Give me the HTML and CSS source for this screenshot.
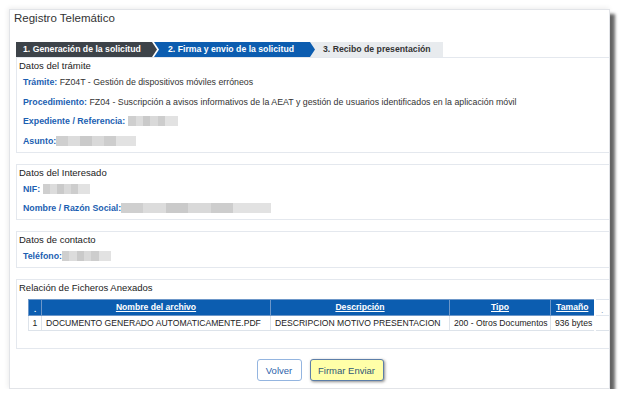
FILE: index.html
```html
<!DOCTYPE html>
<html lang="es">
<head>
<meta charset="utf-8">
<title>Registro Telemático</title>
<link rel="stylesheet" href="styles.css">
</head>
<body>
<div class="window">
  <div class="title">Registro Telemático</div>
  <div class="steps">
    <div class="step step1">1. Generación de la solicitud</div>
    <div class="step step2">2. Firma y envio de la solicitud</div>
    <div class="step step3">3. Recibo de presentación</div>
  </div>

  <div class="section s1">
    <div class="sec-title">Datos del trámite</div>
    <div class="row"><span class="lbl">Trámite:</span> FZ04T - Gestión de dispositivos móviles erróneos</div>
    <div class="row"><span class="lbl">Procedimiento:</span> FZ04 - Suscripción a avisos informativos de la AEAT y gestión de usuarios identificados en la aplicación móvil</div>
    <div class="row"><span class="lbl">Expediente / Referencia:</span> <span class="blur b-exp"></span></div>
    <div class="row"><span class="lbl">Asunto:</span><span class="blur b-asu"></span></div>
  </div>

  <div class="section">
    <div class="sec-title">Datos del Interesado</div>
    <div class="row"><span class="lbl">NIF:</span> <span class="blur b-nif"></span></div>
    <div class="row"><span class="lbl">Nombre / Razón Social:</span><span class="blur b-nom"></span></div>
  </div>

  <div class="section">
    <div class="sec-title">Datos de contacto</div>
    <div class="row"><span class="lbl">Teléfono:</span><span class="blur b-tel"></span></div>
  </div>

  <div class="section s4">
    <div class="sec-title">Relación de Ficheros Anexados</div>
    <table class="files">
      <colgroup>
        <col class="c0"><col class="c1"><col class="c2"><col class="c3"><col class="c4"><col class="c5">
      </colgroup>
      <thead>
        <tr>
          <th class="dot">.</th>
          <th><u>Nombre del archivo</u></th>
          <th><u>Descripción</u></th>
          <th><u>Tipo</u></th>
          <th><u>Tamaño</u></th>
          <th class="empty">.</th>
        </tr>
      </thead>
      <tbody>
        <tr>
          <td class="num">1</td>
          <td>DOCUMENTO GENERADO AUTOMATICAMENTE.PDF</td>
          <td>DESCRIPCION MOTIVO PRESENTACION</td>
          <td>200 - Otros Documentos</td>
          <td>936 bytes</td>
          <td class="emptyd"></td>
        </tr>
      </tbody>
    </table>
  </div>

  <div class="buttons">
    <button class="btn btn-back">Volver</button>
    <button class="btn btn-sign">Firmar Enviar</button>
  </div>
</div>
</body>
</html>
```

FILE: styles.css
```css
html, body {
  margin: 0;
  padding: 0;
  background: #ffffff;
}

body {
  font-family: "Liberation Sans", Arial, sans-serif;
  color: #333;
}

.window {
  margin: 9px 0 0 9px;
  width: 599px;
  height: 378px;
  border: 1px solid #e2e4e8;
  background: #fff;
  box-shadow: 5px 5px 3px rgba(0, 0, 0, 0.6), -1px -1px 5px rgba(0, 0, 0, 0.08);
  overflow: hidden;
  position: relative;
}

.title {
  height: 30px;
  padding: 2px 0 0 4px;
  font-size: 11.5px;
  line-height: 13px;
  color: #333;
}

.steps {
  display: flex;
  height: 15px;
  margin-left: 6px;
  font-size: 8.7px;
  font-weight: bold;
  line-height: 15px;
  white-space: nowrap;
}

.step {
  height: 15px;
}

.step1 {
  width: 141px;
  padding-left: 7px;
  box-sizing: border-box;
  background: #3d4349;
  color: #fff;
  clip-path: polygon(0 0, calc(100% - 5px) 0, 100% 50%, calc(100% - 5px) 100%, 0 100%);
  position: relative;
  z-index: 2;
}

.step2 {
  width: 161px;
  margin-left: -3px;
  padding-left: 14px;
  box-sizing: border-box;
  background: #0c5db0;
  color: #fff;
  clip-path: polygon(0 0, calc(100% - 5px) 0, 100% 50%, calc(100% - 5px) 100%, 0 100%, 5px 50%);
  position: relative;
  z-index: 1;
}

.step3 {
  width: 133px;
  margin-left: -5px;
  padding-left: 13px;
  box-sizing: border-box;
  background: #e8ebee;
  color: #333;
}

.section {
  margin: 11px 0 0 6px;
  width: 610px;
  border: 1px solid #e4e8ee;
  padding: 2px 0 5px 2px;
  font-size: 8.8px;
  line-height: 12px;
}

.s1 {
  margin-top: 0;
}

.sec-title {
  color: #222;
  font-size: 9.5px;
}

.row {
  margin: 7.6px 0 0 4px;
  color: #333;
  white-space: nowrap;
}

.sec-title + .row {
  margin-top: 4px;
}

.lbl {
  color: #1c5fb2;
  font-weight: bold;
}

.blur {
  display: inline-block;
  height: 10px;
  vertical-align: -2px;
  background: linear-gradient(90deg,
    #cfcfcf 0, #cfcfcf 15%, #dcdcdc 15%, #dcdcdc 30%, #cacaca 30%, #cacaca 45%,
    #d9d9d9 45%, #d9d9d9 60%, #cdcdcd 60%, #cdcdcd 75%, #e2e2e2 75%, #e2e2e2 100%);
}

.b-exp { width: 50px; }
.b-asu { width: 80px; }
.b-nif { width: 47px; }
.b-nom { width: 150px; }
.b-tel { width: 49px; }

.s4 {
  padding-bottom: 17px;
}

.files {
  margin: 5px 0 0 9px;
  border-collapse: collapse;
  table-layout: fixed;
  width: 581px;
  font-size: 8.6px;
}

.c0 { width: 13px; }
.c1 { width: 229px; }
.c2 { width: 179px; }
.c3 { width: 101px; }
.c4 { width: 44px; }
.c5 { width: 15px; }

.files th {
  background: #0c5db0;
  color: #fff;
  font-weight: bold;
  height: 15px;
  padding: 0;
  border: 1px solid #6d97c9;
  text-align: center;
  line-height: 13px;
}

.files th.dot {
  font-size: 8px;
  vertical-align: bottom;
  line-height: 10px;
}

.files th.empty {
  background: #fff;
  color: #8aa0b8;
  border: 1px solid #e0e6ee;
  border-left: 2px solid #fff;
  font-weight: normal;
  vertical-align: bottom;
  line-height: 10px;
}

.files td {
  height: 14px;
  padding: 0 0 0 4px;
  border: 1px solid #dde3ea;
  color: #222;
  white-space: nowrap;
  overflow: hidden;
  line-height: 13px;
}

.files td.num {
  text-align: center;
  padding: 0;
}

.files td.emptyd {
  border-left: 2px solid #fff;
}

.buttons {
  display: flex;
  justify-content: center;
  gap: 8px;
  padding-left: 21px;
  margin-top: 10px;
}

.btn {
  height: 22px;
  font-family: "Liberation Sans", Arial, sans-serif;
  font-size: 9.5px;
  border-radius: 3px;
  padding: 0;
  cursor: pointer;
}

.btn-back {
  width: 45px;
  background: #fff;
  border: 1px solid #94b5e0;
  color: #2d62aa;
}

.btn-sign {
  width: 74px;
  background: #ffffa8;
  border: 1px solid #5c7ea8;
  color: #2f5877;
  box-shadow: 1px 1px 3px rgba(0, 0, 0, 0.45);
}
```
